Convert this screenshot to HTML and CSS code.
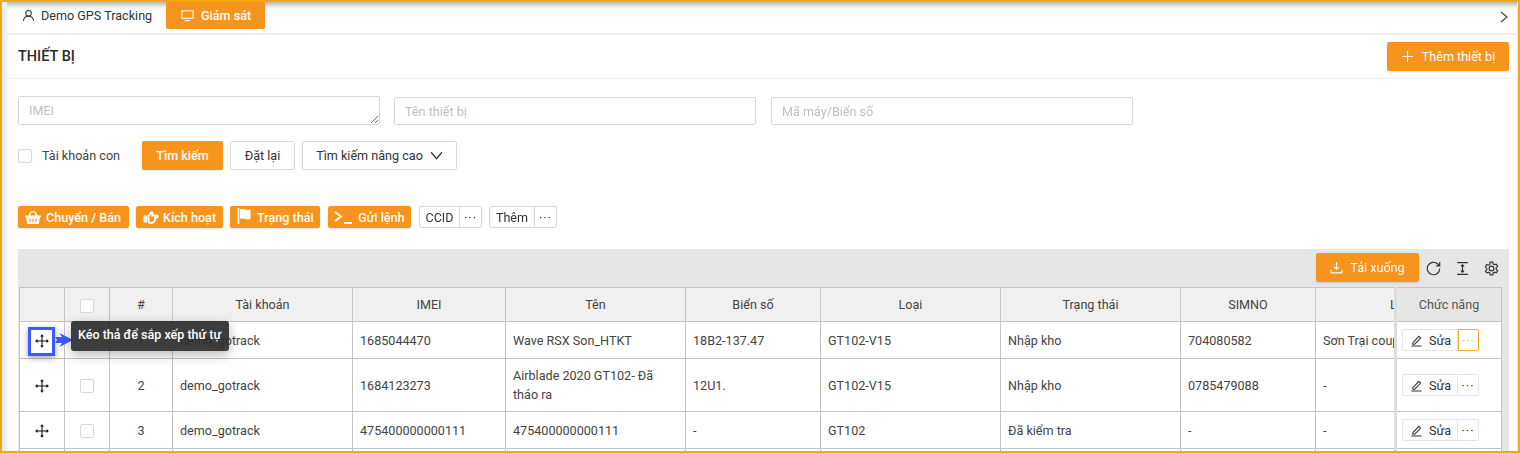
FILE: index.html
```html
<!DOCTYPE html>
<html lang="vi">
<head>
<meta charset="UTF-8" />
<meta name="viewport" content="width=device-width, initial-scale=1" />
<title>Thiết bị</title>
<link rel="stylesheet" href="styles.css">
</head>
<body>
<div class="frame">
<div class="inner">

  <div class="topbar">
    <div class="tab">
      <svg class="ico" viewBox="0 0 14 14"><circle cx="7" cy="4.5" r="3" /><path d="M1.5 13c.3-3.2 2.6-5.2 5.5-5.2s5.200 2 5.500 5.200" /></svg>
      Demo GPS Tracking
    </div>
    <div class="tab tab-active">
      <svg class="ico" viewBox="0 0 14 14"><rect x="1" y="2" width="12" height="8" /><path d="M4 12.500h6" /></svg>
      Giám sát
    </div>
    <svg class="tab-next" viewBox="0 0 8 12"><path d="M1 1l6 5-6 5" /></svg>
  </div>

  <div class="head">
    <h1>THIẾT BỊ</h1>
    <button class="btn btn-main btn-add">
      <svg class="ico" viewBox="0 0 12 12"><path d="M6 1v10M1 6h10" /></svg>
      Thêm thiết bị
    </button>
  </div>

  <div class="content">
    <div class="filters">
      <textarea class="field field-area" placeholder="IMEI"></textarea>
      <input class="field" type="text" placeholder="Tên thiết bị" />
      <input class="field" type="text" placeholder="Mã máy/Biển số" />
    </div>

    <div class="search-row">
      <label class="sub"><span class="check"></span>Tài khoản con</label>
      <button class="btn btn-main btn-search">Tìm kiếm</button>
      <button class="btn btn-line btn-reset">Đặt lại</button>
      <button class="btn btn-line btn-more">Tìm kiếm nâng cao
        <svg class="ico" viewBox="0 0 12 8"><path d="M1 1l5 6 5-6" /></svg>
      </button>
    </div>

    <div class="actions">
      <button class="btn btn-main btn-act w-sell">
        <svg class="fill" viewBox="0 0 16 14"><path d="M0 5.500h16V7h-1l-1.200 7H2.200L1 7H0z M3.800 5.500C3.800-.6 12.200-.6 12.200 5.500h-1.600C10.600 1.300 5.400 1.300 5.400 5.500z" /><path class="cut" d="M5 8.500v3.500M8 8.500v3.500M11 8.500v3.500" /></svg>
        Chuyển / Bán
      </button>
      <button class="btn btn-main btn-act w-activate">
        <svg class="ico thick" viewBox="0 0 16 14"><path d="M5.500 6L8 2.500Q9 1.500 9.500 3L9 5.500h5.200Q15.500 6.500 14.200 7.500H12v2.500Q11.200 12.800 9 12.800H6.500L5.500 11.500z" /><path class="solid" d="M.500 5.500h3.500v7H.500z" /></svg>
        Kích hoạt
      </button>
      <button class="btn btn-main btn-act w-status">
        <svg class="fill flag" viewBox="0 0 14 16"><path d="M.500 0h1.800v16H.500z M3 1.500c3.500-1.600 6 1.600 10.500 0v9.500c-4.500 1.500-7-1.600-10.500 0z" /></svg>
        Trạng thái
      </button>
      <button class="btn btn-main btn-act w-send">
        <svg class="ico thick term" viewBox="0 0 18 13"><path d="M1 1l6 4.500-6 4.500M10 12h8" /></svg>
        Gửi lệnh
      </button>
      <div class="group w-ccid"><span class="g-label">CCID</span><span class="g-dots">···</span></div>
      <div class="group w-them"><span class="g-label">Thêm</span><span class="g-dots">···</span></div>
    </div>

    <div class="tools">
      <button class="btn btn-main btn-down">
        <svg class="ico" viewBox="0 0 12 12"><path d="M6 1v6.500M3.800 5.500L6 7.500l2.200-2M1 8v3h10V8" /></svg>
        Tải xuống
      </button>
      <svg class="tool-ico" viewBox="0 0 14 14"><path d="M12.800 7a5.800 5.800 0 1 1-1.800-4.200L12.800 4.500M12.800 1v3.500H9.500" /></svg>
      <svg class="tool-ico" viewBox="0 0 14 14"><path d="M2 1.500h10M2 12.500h10M7 3.500v7M5.500 5L7 3.500 8.500 5M5.500 9L7 10.500 8.500 9" /></svg>
      <svg class="tool-ico" viewBox="0 0 14 14"><circle cx="7" cy="7" r="2.200" /><path d="M5.800 1h2.400l.4 1.700 1.200.7 1.700-.5 1.200 2.100-1.300 1.200v1.500l1.300 1.200-1.200 2.100-1.700-.5-1.200.7-.4 1.700H5.800l-.4-1.700-1.200-.7-1.700.5L1.300 9.400l1.300-1.200V6.700L1.300 5.500l1.200-2.100 1.700.5 1.200-.7z" /></svg>
    </div>

    <div class="table-wrap">
      <table class="devices">
        <colgroup>
          <col class="c-move"><col class="c-check"><col class="c-no"><col class="c-acc"><col class="c-imei"><col class="c-name"><col class="c-plate"><col class="c-type"><col class="c-state"><col class="c-sim"><col class="c-clip"><col class="c-fn">
        </colgroup>
        <thead>
          <tr>
            <th></th>
            <th><span class="check check-on"></span></th>
            <th>#</th>
            <th>Tài khoản</th>
            <th>IMEI</th>
            <th>Tên</th>
            <th>Biển số</th>
            <th>Loại</th>
            <th>Trạng thái</th>
            <th>SIMNO</th>
            <th class="clip clip-head">L</th>
            <th class="fn">Chức năng</th>
          </tr>
        </thead>
        <tbody>
          <tr class="r-37">
            <td class="mid"><svg class="move" viewBox="0 0 14 14"><path d="M7 1v12M1 7h12M5.700 2.500L7 1l1.300 1.500M5.700 11.500L7 13l1.300-1.500M2.500 5.700L1 7l1.500 1.300M11.500 5.700L13 7l-1.500 1.300" /></svg></td>
            <td class="mid"><span class="check"></span></td>
            <td class="mid">1</td>
            <td>demo_gotrack</td>
            <td>1685044470</td>
            <td>Wave RSX Son_HTKT</td>
            <td>18B2-137.47</td>
            <td>GT102-V15</td>
            <td>Nhập kho</td>
            <td>704080582</td>
            <td class="clip">Sơn Trại coupe</td>
            <td class="fn">
              <div class="row-btns">
                <span class="edit"><svg class="ico" viewBox="0 0 14 14"><path d="M3 9.500L9.500 2.500l2 1.800L5 11H3zM1.500 13h11" /></svg>Sửa</span><span class="dots dots-on">···</span>
              </div>
            </td>
          </tr>
          <tr class="r-53">
            <td class="mid"><svg class="move" viewBox="0 0 14 14"><path d="M7 1v12M1 7h12M5.700 2.500L7 1l1.300 1.500M5.700 11.500L7 13l1.300-1.500M2.500 5.700L1 7l1.500 1.300M11.500 5.700L13 7l-1.500 1.300" /></svg></td>
            <td class="mid"><span class="check"></span></td>
            <td class="mid">2</td>
            <td>demo_gotrack</td>
            <td>1684123273</td>
            <td>Airblade 2020 GT102- Đã tháo ra</td>
            <td>12U1.</td>
            <td>GT102-V15</td>
            <td>Nhập kho</td>
            <td>0785479088</td>
            <td class="clip">-</td>
            <td class="fn">
              <div class="row-btns">
                <span class="edit"><svg class="ico" viewBox="0 0 14 14"><path d="M3 9.500L9.500 2.500l2 1.800L5 11H3zM1.500 13h11" /></svg>Sửa</span><span class="dots">···</span>
              </div>
            </td>
          </tr>
          <tr class="r-37">
            <td class="mid"><svg class="move" viewBox="0 0 14 14"><path d="M7 1v12M1 7h12M5.700 2.500L7 1l1.300 1.500M5.700 11.500L7 13l1.300-1.500M2.500 5.700L1 7l1.500 1.300M11.500 5.700L13 7l-1.500 1.300" /></svg></td>
            <td class="mid"><span class="check"></span></td>
            <td class="mid">3</td>
            <td>demo_gotrack</td>
            <td>475400000000111</td>
            <td>475400000000111</td>
            <td>-</td>
            <td>GT102</td>
            <td>Đã kiểm tra</td>
            <td>-</td>
            <td class="clip">-</td>
            <td class="fn">
              <div class="row-btns">
                <span class="edit"><svg class="ico" viewBox="0 0 14 14"><path d="M3 9.500L9.500 2.500l2 1.800L5 11H3zM1.500 13h11" /></svg>Sửa</span><span class="dots">···</span>
              </div>
            </td>
          </tr>
          <tr class="r-37">
            <td></td><td></td><td></td><td></td><td></td><td></td><td></td><td></td><td></td><td></td><td class="clip"></td><td class="fn"></td>
          </tr>
        </tbody>
      </table>
      <div class="scroll-strip"></div>

      <!-- hint overlay on the first row -->
      <div class="hint-box"></div>
      <svg class="hint-arrow" viewBox="0 0 18 14"><path d="M0 4h7L4.500 0 18 7 4.500 14 7 10H0l2-3z" /></svg>
      <div class="hint-tip">Kéo thả để sắp xếp thứ tự</div>
    </div>
  </div>

</div>
</div>
</body>
</html>
```

FILE: styles.css
```css
* { box-sizing: border-box; }
html, body { margin: 0; padding: 0; height: 100%; overflow: hidden; }
body { font-family: Roboto, "Noto Sans", sans-serif; font-size: 12.600px; color: #333; background: #fff; }

.frame { height: 453px; border: 2px solid #f6a70f; overflow: hidden; }
.inner { height: 100%; border-left: 5px solid #f0f0f0; border-right: 1px solid #eee; box-shadow: inset 0 6px 5px -3px rgba(0,0,0,.3); }

.ico { width: 13px; height: 13px; fill: none; stroke: currentColor; stroke-width: 1.100; flex: none; }
.ico.thick { stroke-width: 1.800; width: 16px; height: 14px; }
.ico.term { width: 18px; height: 13px; }
.ico .solid { fill: currentColor; stroke: none; }
.fill { width: 16px; height: 14px; fill: currentColor; flex: none; }
.fill.flag { width: 14px; height: 16px; margin-top: -3px; }
.fill .cut { fill: none; stroke: #f7941d; stroke-width: 1.200; }

.topbar { display: flex; height: 31px; align-items: flex-start; position: relative; }
.tab { height: 27px; display: flex; align-items: center; gap: 6px; padding-left: 15px; width: 159px; color: #333; }
.tab-active { background: #f7941d; color: #fff; width: 99px; border-radius: 0 0 2px 2px; gap: 7px; font-weight: 500; }
.tab-next { position: absolute; right: 9px; top: 9px; width: 8px; height: 12px; fill: none; stroke: #444; stroke-width: 1.200; }

.head { height: 46px; display: flex; align-items: center; justify-content: space-between; padding: 0 8px 1px 11px; border-top: 2px solid #f0f0f0; border-bottom: 1px solid #eee; }
.head h1 { margin: 0; font-size: 14.500px; font-weight: 500; color: #2b2b2b; }

.btn { font-family: inherit; font-size: 12.600px; border-radius: 2px; cursor: pointer; display: inline-flex; align-items: center; justify-content: center; padding: 0; }
.btn-main { background: #f7941d; border: 1px solid #f7941d; color: #fff; box-shadow: 0 1px 2px rgba(0,0,0,.12); }
.btn-line { background: #fff; border: 1px solid #d9d9d9; color: #333; }
.btn-add { width: 122px; height: 29px; gap: 8px; }

.content { padding: 17px 8px 0 11px; }

.filters { display: flex; align-items: flex-end; height: 29px; }
.field { width: 362px; height: 28px; border: 1px solid #d9d9d9; border-radius: 2px; padding: 0 10px; margin-right: 15px; font-family: inherit; font-size: 12.600px; color: #333; outline: none; }
.field::placeholder { color: #bfbfbf; }
.field-area { height: 29px; margin-right: 14px; padding: 5px 10px; line-height: 18px; display: block; }

.search-row { display: flex; align-items: center; margin-top: 16px; height: 29px; }
.sub { display: flex; align-items: center; width: 124px; color: #444; }
.check { display: inline-block; width: 14px; height: 14px; background: #fff; border: 1px solid #d9d9d9; border-radius: 2px; vertical-align: middle; }
.sub .check { margin-right: 10px; }
.check-on { border-color: #d9d9d9; }
.btn-search { width: 81px; height: 29px; margin-right: 7px; font-weight: 500; }
.btn-reset { width: 65px; height: 29px; margin-right: 7px; }
.btn-more { width: 155px; height: 29px; gap: 7px; }

.actions { display: flex; margin-top: 36px; height: 22px; }
.btn-act { height: 22px; gap: 5px; margin-right: 7px; font-weight: 500; justify-content: flex-start; padding-left: 6px; }
.w-sell { width: 111px; }
.w-activate { width: 87px; gap: 4px; }
.w-status { width: 90px; margin-right: 8px; gap: 6px; }
.w-send { width: 83px; margin-right: 8px; padding-left: 5px; gap: 6px; }
.group { display: flex; height: 22px; border: 1px solid #d9d9d9; border-radius: 2px; color: #333; }
.g-label { display: flex; align-items: center; justify-content: center; flex: 1; border-right: 1px solid #d9d9d9; }
.g-dots { width: 21px; display: flex; align-items: center; justify-content: center; letter-spacing: 1px; }
.w-ccid { width: 63px; margin-right: 7px; }
.w-them { width: 68px; }

.tools { margin-top: 21px; height: 38px; background: #e6e6e6; display: flex; align-items: flex-start; justify-content: flex-end; padding: 4px 10px 0 0; }
.btn-down { width: 103px; height: 29px; gap: 7px; }
.tool-ico { width: 15px; height: 15px; margin: 8px 7px 0 7px; fill: none; stroke: #333; stroke-width: 1.100; flex: none; }
.tool-ico:last-child { margin-right: 0; }

.table-wrap { position: relative; display: flex; background: #e6e6e6; }
.devices { width: 1482px; table-layout: fixed; border-collapse: collapse; margin-left: 1px; background: #fff; flex: none; }
.c-move { width: 45px; }
.c-check { width: 45px; }
.c-no { width: 63px; }
.c-acc { width: 180px; }
.c-imei { width: 153px; }
.c-name { width: 180px; }
.c-plate { width: 135px; }
.c-type { width: 180px; }
.c-state { width: 180px; }
.c-sim { width: 135px; }
.c-clip { width: 80px; }
.c-fn { width: 106px; }

.devices th, .devices td { border: 1px solid #c4c4c4; padding: 0 7px; line-height: 19px; text-align: left; color: #444; }
.devices th { height: 34px; background: #f0f0f0; text-align: center; font-weight: 400; }
.devices td.mid { text-align: center; padding: 0; }
.r-37 td { height: 37px; }
.r-53 td { height: 53px; }

.clip { white-space: nowrap; overflow: hidden; }
.devices th.clip-head { text-align: left; padding-left: 74px; }
.devices th.fn { background: #e6e6e6; color: #555; padding: 0; }
.devices .fn { border-left: 3px solid #dcdcdc; padding: 0 0 0 5px; }

.move { width: 14px; height: 14px; fill: none; stroke: #111; stroke-width: 1.100; vertical-align: middle; }

.row-btns { display: flex; height: 22px; width: 77px; }
.edit { flex: 1; display: flex; align-items: center; gap: 6px; padding-left: 7px; border: 1px solid #e4e4e4; border-radius: 2px 0 0 2px; color: #333; }
.dots { width: 21px; display: flex; align-items: center; justify-content: center; border: 1px solid #e4e4e4; border-left: 0; border-radius: 0 2px 2px 0; color: #333; letter-spacing: 1px; }
.dots-on { border: 1px solid #f7a928; color: #f7a928; }

.scroll-strip { flex: 1; }

.hint-box { position: absolute; left: 10px; top: 40px; width: 27px; height: 29px; border: 3px solid #3d5afe; box-shadow: 0 2px 6px rgba(0,0,0,.35); }
.hint-arrow { position: absolute; left: 37px; top: 46px; width: 18px; height: 14px; fill: #3d5afe; }
.hint-tip { position: absolute; left: 53px; top: 34px; width: 158px; height: 30px; line-height: 27px; padding-left: 7px; background: rgba(45,45,45,.92); color: #fff; border-radius: 3px; font-size: 12.500px; font-weight: 500; white-space: nowrap; box-shadow: 0 4px 12px rgba(0,0,0,.28); }
```
